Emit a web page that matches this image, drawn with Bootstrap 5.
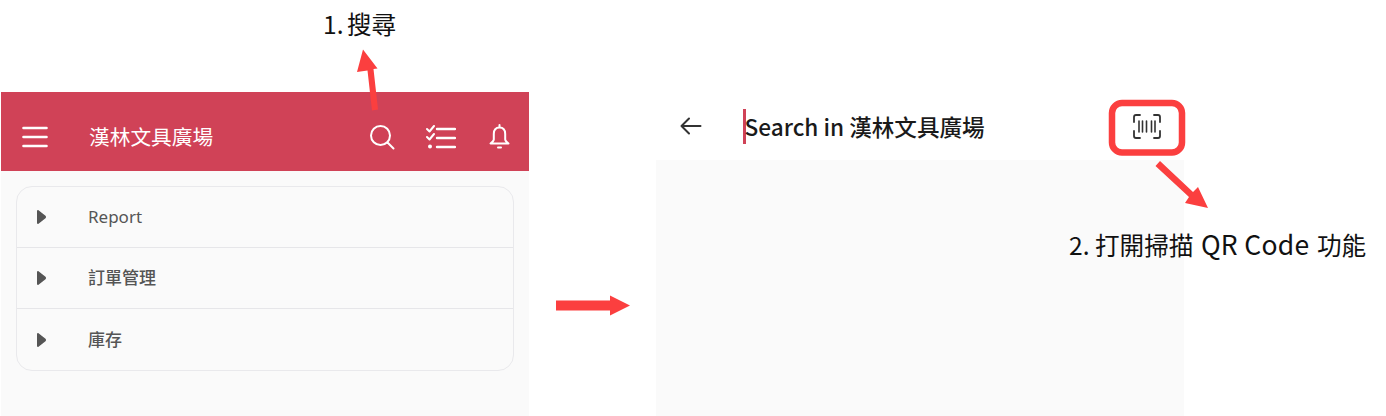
<!DOCTYPE html>
<html lang="zh-Hant">
<head>
<meta charset="utf-8">
<title>搜尋</title>
<link href="https://cdn.jsdelivr.net/npm/bootstrap@5.3.0/dist/css/bootstrap.min.css" rel="stylesheet">
<style>
html,body{margin:0;background:#fff;overflow:hidden}
body{font-family:"Noto Sans","Noto Sans CJK TC",sans-serif}
.stage{position:relative;width:1386px;height:416px;padding-left:1px}
.phone-a{width:528px;height:324px;margin-top:92px;background:#fafafa}
.phone-b{width:528px;height:416px;margin-left:127px}
.app-head{height:79px;background:#d04257;color:#fff;padding:10px 19px 0 21px}
.app-title{font-family:"Noto Sans CJK TC",sans-serif;font-size:20.700px;font-weight:400;margin-left:41px;line-height:1}
.head-ico{display:block}
.menu-box{margin:15px 15px 0 15px;border:1px solid #e9e9ec;border-radius:16px;overflow:hidden}
.menu-row{height:61px;padding-left:20px;color:#555;font-size:17px;font-weight:500;border-bottom:1px solid #e6e6e9}
.menu-row:last-child{border-bottom:0;height:61px}
.menu-label{margin-left:42px}
.menu-label-latin{font-weight:400}
.search-head{height:68px;margin-top:92px;padding-left:24px;background:#fff}
.caret{width:2.500px;height:35px;background:#d04257;margin-left:41px;flex-shrink:0}
.search-text{font-family:"Noto Sans CJK TC",sans-serif;font-size:22.600px;font-weight:500;line-height:1;color:#1a1a1a;margin-top:3px;margin-left:-1px}
.scan-ico{margin-left:auto;margin-right:23px}
.search-body{height:256px;background:#fafafa}
.note{position:absolute;color:#111;font-size:24.600px;line-height:1;white-space:nowrap;font-family:"Noto Sans CJK TC",sans-serif}
.note-a{left:323px;top:11px;word-spacing:-2px}
.note-b{left:1069px;top:231px}
.note-latin{font-size:26.500px;letter-spacing:.3px;margin:0 2px}
.overlay{position:absolute;left:0;top:0}
</style>
</head>
<body>
<div class="stage d-flex align-items-start">
  <section class="phone-a flex-shrink-0">
    <header class="app-head d-flex align-items-center">
      <svg class="head-ico" width="26" height="22" viewBox="0 0 26 22" fill="none" stroke="#fff" stroke-width="2.600" stroke-linecap="round"><path d="M1.500 2h23M1.500 11h23M1.500 20h23"/></svg>
      <span class="app-title">漢林文具廣場</span>
      <svg class="head-ico ms-auto" width="26" height="26" viewBox="0 0 26 26" fill="none" stroke="#fff" stroke-width="2" stroke-linecap="round"><circle cx="11.500" cy="11.500" r="9.500"/><path d="M18.500 18.500l6 6"/></svg>
      <svg class="head-ico" style="margin-left:31px" width="30" height="24" viewBox="0 0 30 24" fill="none" stroke="#fff" stroke-linecap="round" stroke-linejoin="round"><path stroke-width="2" d="M1 4l2.500 2.500L8 1M1 12l2.500 2.500L8 9"/><path stroke-width="2.400" d="M11 4h18M11 13h18M11 22h18"/><circle cx="4" cy="21.500" r="2" fill="#fff" stroke="none"/></svg>
      <svg class="head-ico" style="margin-left:33px" width="21" height="25" viewBox="0 0 21 25" fill="none" stroke="#fff" stroke-width="2" stroke-linecap="round" stroke-linejoin="round"><path d="M10.500 3.500c-3.800 0-5.700 2.800-5.700 6.500v5.500c0 1.500-1.300 2.500-3.300 4h18c-2-1.500-3.300-2.500-3.300-4V10c0-3.700-1.900-6.500-5.700-6.500z"/><path d="M10.500 1v2M9 23.500h3"/></svg>
    </header>
    <div class="menu-box">
      <div class="menu-row d-flex align-items-center">
        <svg width="9" height="16" viewBox="0 0 9 16"><path d="M1.500 1.200c-.6-.5-1.500-.1-1.500.7v12.200c0 .8.9 1.200 1.500.7l7-5.500c.7-.6.700-2 0-2.600z" fill="#555"/></svg>
        <span class="menu-label menu-label-latin">Report</span>
      </div>
      <div class="menu-row d-flex align-items-center">
        <svg width="9" height="16" viewBox="0 0 9 16"><path d="M1.500 1.200c-.6-.5-1.500-.1-1.500.7v12.200c0 .8.9 1.200 1.500.7l7-5.500c.7-.6.700-2 0-2.600z" fill="#555"/></svg>
        <span class="menu-label">訂單管理</span>
      </div>
      <div class="menu-row d-flex align-items-center">
        <svg width="9" height="16" viewBox="0 0 9 16"><path d="M1.500 1.200c-.6-.5-1.500-.1-1.500.7v12.200c0 .8.9 1.200 1.500.7l7-5.500c.7-.6.700-2 0-2.600z" fill="#555"/></svg>
        <span class="menu-label">庫存</span>
      </div>
    </div>
  </section>
  <section class="phone-b flex-shrink-0">
    <div class="search-head d-flex align-items-center">
      <svg class="flex-shrink-0" width="22" height="18" viewBox="0 0 22 18" fill="none" stroke="#333" stroke-width="2" stroke-linecap="round" stroke-linejoin="round"><path d="M20.500 9H1.500M9 1.500L1.500 9L9 16.500"/></svg>
      <span class="caret"></span>
      <span class="search-text">Search in 漢林文具廣場</span>
      <svg class="scan-ico" width="28" height="25" viewBox="0 0 28 25" fill="none" stroke="#333" stroke-linecap="round"><path stroke-width="1.800" d="M1 8V3q0-2 2-2h4M21 1h4q2 0 2 2v5M1 17v5q0 2 2 2h4M21 24h4q2 0 2-2v-5"/><path stroke-width="1.600" d="M6 7v11M9.500 7v11M13.500 7v11M18.500 7v11M22 7v11"/></svg>
    </div>
    <div class="search-body"></div>
  </section>
  <svg class="overlay" width="1386" height="416" viewBox="0 0 1386 416" aria-hidden="true">
    <rect x="1112" y="103" width="70" height="49.500" rx="10" fill="none" stroke="#fb3f3f" stroke-width="6.500"/>
    <path d="M372 110.500L378 109.500L373.500 69L377.500 68.500L363 49.500L357 72L367.500 70.500Z" fill="#fb3f3f"/>
    <path d="M556 300.500H610V295.500L630 305.500L610 315.500V310.500H556Z" fill="#fb3f3f"/>
    <path d="M1160 161L1193 192L1198 187L1208 208L1185 203L1189 197L1155.500 166Z" fill="#fb3f3f"/>
  </svg>
  <div class="note note-a">1. 搜尋</div>
  <div class="note note-b">2. 打開掃描 <span class="note-latin">QR Code</span> 功能</div>
</div>
</body>
</html>
